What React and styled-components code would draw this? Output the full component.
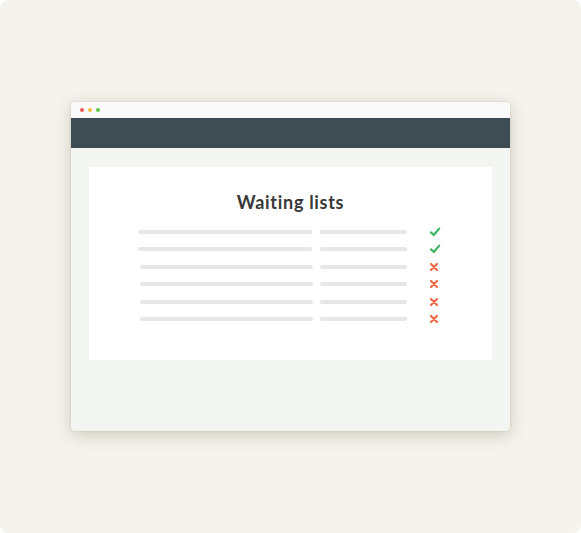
import styled, { createGlobalStyle } from "styled-components";

const Global = createGlobalStyle`
  html, body { margin: 0; padding: 0; background: #ffffff; }
  body { font-family: "Lato", "Liberation Sans", sans-serif; }
`;

const Stage = styled.div`
  width: 581px;
  height: 533px;
  background: #f4f3ee;
  border-radius: 8px;
  box-sizing: border-box;
  padding: 102px 71px 0 71px;
`;

const Window = styled.div`
  width: 439px;
  height: 329px;
  background: #f3f5f3;
  border-radius: 4px;
  overflow: hidden;
  box-shadow: 0 4px 16px rgba(130, 110, 70, 0.3), 0 0 2px rgba(120, 105, 75, 0.25);
  display: flex;
  flex-direction: column;
`;

const TitleBar = styled.div`
  height: 16px;
  background: #fafafa;
  display: flex;
  align-items: center;
  gap: 4px;
  padding-left: 9px;
`;

const Dot = styled.span`
  width: 4px;
  height: 4px;
  border-radius: 50%;
  background: ${(p) => p.$c};
`;

const NavBar = styled.div`
  height: 30px;
  background: #3e4c54;
`;

const Body = styled.div`
  flex: 1;
  padding: 19px 18px 0 18px;
`;

const Panel = styled.div`
  height: 193px;
  background: #ffffff;
  display: flex;
  flex-direction: column;
  align-items: center;
  padding-top: 23px;
  box-sizing: border-box;
`;

const Title = styled.h1`
  margin: 0 0 16px 0;
  font-size: 18px;
  font-weight: 700;
  color: #383838;
  letter-spacing: 0.7px;
  line-height: 24px;
`;

const List = styled.div`
  display: flex;
  flex-direction: column;
  gap: 13.4px;
  width: 306px;
`;

const Row = styled.div`
  display: flex;
  align-items: center;
  height: 4px;
  padding-left: ${(p) => (p.$shift ? 2 : 0)}px;
`;

const Bar = styled.div`
  height: 4px;
  border-radius: 2px;
  background: #e7e7e9;
  width: ${(p) => p.$w}px;
  margin-right: ${(p) => p.$mr}px;
`;

const Icon = styled.svg`
  width: 12px;
  height: 12px;
  flex: none;
`;

const Check = () => (
  <Icon viewBox="0 0 12 12">
    <path d="M2 6.4 L4.8 9 L10.2 2.6" fill="none" stroke="#3db560" strokeWidth="2.2" strokeLinecap="round" strokeLinejoin="round" />
  </Icon>
);

const Cross = () => (
  <Icon viewBox="0 0 12 12">
    <path d="M3 3 L9 9 M9 3 L3 9" fill="none" stroke="#f26a45" strokeWidth="2.2" strokeLinecap="round" />
  </Icon>
);

const rows = [true, true, false, false, false, false];

export default function App() {
  return (
    <>
      <Global />
      <Stage>
        <Window>
          <TitleBar>
            <Dot $c="#ee5a52" />
            <Dot $c="#f5bd3f" />
            <Dot $c="#5cc64a" />
          </TitleBar>
          <NavBar />
          <Body>
            <Panel>
              <Title>Waiting lists</Title>
              <List>
                {rows.map((ok, i) => (
                  <Row key={i} $shift={!ok}>
                    <Bar $w={ok ? 174 : 173} $mr={ok ? 8 : 7} />
                    <Bar $w={87} $mr={ok ? 22 : 21} />
                    {ok ? <Check /> : <Cross />}
                  </Row>
                ))}
              </List>
            </Panel>
          </Body>
        </Window>
      </Stage>
    </>
  );
}
